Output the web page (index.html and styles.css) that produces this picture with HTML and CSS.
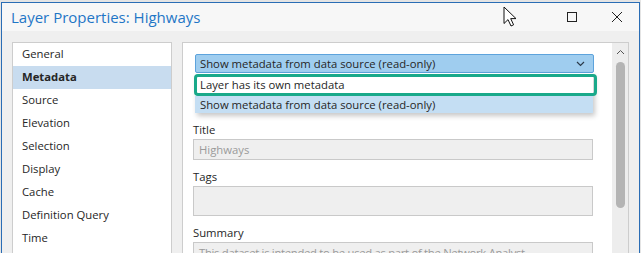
FILE: index.html
```html
<!DOCTYPE html>
<html lang="en">
<head>
    <meta charset="UTF-8">
    <title>Layer Properties: Highways</title>
    <link rel="stylesheet" href="styles.css">
</head>
<body>
<div class="window">
    <div class="titlebar">
        <span class="title">Layer Properties: Highways</span>
        <div class="controls">
            <svg class="btn" width="12" height="12" viewBox="0 0 12 12"><rect x="1.5" y="1.5" width="9" height="9" fill="none" stroke="#222" stroke-width="1"/></svg>
            <svg class="btn" width="12" height="12" viewBox="0 0 12 12"><path d="M1 1L11 11M11 1L1 11" stroke="#222" stroke-width="1" fill="none"/></svg>
        </div>
        <!-- mouse pointer over the title bar -->
        <svg class="pointer" width="14" height="21" viewBox="0 0 14 21"><path d="M1 1V17.5L5 13.6L8 20L10.6 18.8L7.7 12.6H13Z" fill="#fff" stroke="#111" stroke-width="1" stroke-linejoin="round"/></svg>
    </div>
    <div class="bd">
        <ul class="nav">
            <li>General</li>
            <li class="on">Metadata</li>
            <li>Source</li>
            <li>Elevation</li>
            <li>Selection</li>
            <li>Display</li>
            <li>Cache</li>
            <li>Definition Query</li>
            <li>Time</li>
        </ul>
        <div class="panel">
            <div class="content">
                <div class="combo-wrap">
                    <div class="combo">
                        <span>Show metadata from data source (read-only)</span>
                        <svg width="9" height="6" viewBox="0 0 9 6"><path d="M1 1L4.5 4.5L8 1" stroke="#2b3a4a" stroke-width="1.2" fill="none"/></svg>
                    </div>
                    <ul class="popup">
                        <li class="hl">Layer has its own metadata</li>
                        <li class="sel">Show metadata from data source (read-only)</li>
                    </ul>
                </div>
                <p class="lbl lbl-first">Title</p>
                <div class="field">Highways</div>
                <p class="lbl">Tags</p>
                <div class="field tall"></div>
                <p class="lbl">Summary</p>
                <div class="field summary">This dataset is intended to be used as part of the Network Analyst</div>
            </div>
            <div class="scrollbar">
                <svg width="9" height="6" viewBox="0 0 9 6"><path d="M1 5L4.5 1.5L8 5" stroke="#555" stroke-width="1" fill="none"/></svg>
                <div class="thumb"></div>
            </div>
        </div>
    </div>
</div>
</body>
</html>
```

FILE: styles.css
```css
/* reset */
html,body{margin:0;padding:0;}
ul,p{margin:0;padding:0;list-style:none;}
body{
    background:#e4e4e4;
    font-family:"Open Sans","Noto Sans",sans-serif;
    font-size:11.3px;
    color:#262626;
    height:253px;
    overflow:hidden;
}

/* window frame */
.window{
    margin:2px 0 0 1px;
    width:637px;
    height:260px;
    border:1px solid #2a6db5;
    border-bottom:0;
    background:#efefef;
}
.titlebar{
    position:relative;
    height:28px;
    background:#f7f7f7;
    display:flex;
    align-items:center;
}
.title{
    margin-left:9px;
    font-size:15px;
    color:#1f76c6;
}
.controls{
    margin-left:auto;
    display:flex;
    gap:33px;
    margin-right:16px;
}
.btn{display:block;}
.pointer{position:absolute;left:501px;top:3px;}

/* body: nav + panel */
.bd{
    display:flex;
    gap:10px;
    padding:11px 10px 0 10px;
}
.nav{
    width:158px;
    height:240px;
    background:#fff;
    border:1px solid #cdcdcd;
}
.nav li{
    height:23px;
    line-height:22px;
    padding-left:9px;
}
.nav li.on{
    background:#c8dcef;
    font-weight:bold;
}

.panel{
    flex:1;
    height:240px;
    display:flex;
    background:#fff;
    border:1px solid #cdcdcd;
}
.content{
    flex:1;
    padding:11px 0 0 10px;
}
.combo-wrap{position:relative;margin-left:2px;width:399px;}
.combo{
    height:17px;
    display:flex;
    align-items:center;
    padding:0 8px 0 4px;
    background:#9fcdef;
    border:1px solid #5da3dc;
    border-radius:2px;
}
.combo span{flex:1;}
.popup{
    position:absolute;
    left:0;
    top:19px;
    width:398px;
    background:#fff;
    box-shadow:2px 3px 5px rgba(0,0,0,0.22);
}
.popup li{
    padding-left:5px;
    line-height:17px;
}
.popup li.hl{
    /* green annotation frame */
    margin-top:1px;
    height:16px;
    line-height:16px;
    border:3px solid #19a98a;
    border-radius:4px;
    margin-right:-4px;
    margin-left:-1px;
    padding-left:3px;
}
.popup li.sel{background:#c4def3;height:17px;padding-left:5px;}

.lbl{
    height:16px;
    line-height:16px;
    margin-top:9px;
}
.lbl-first{margin-top:49px;}
.field{
    width:393px;
    height:19px;
    line-height:19px;
    margin-top:1px;
    padding-left:5px;
    background:#efefef;
    border:1px solid #c9c9c9;
    color:#9a9a9a;
    white-space:nowrap;
    overflow:hidden;
}
.field.tall{height:28px;}
.field.summary{letter-spacing:-0.3px;}

.scrollbar{
    width:16px;
    background:#ededed;
    display:flex;
    flex-direction:column;
    align-items:center;
}
.scrollbar svg{margin-top:6px;}
.thumb{
    margin-top:7px;
    width:9px;
    height:146px;
    border-radius:5px;
    background:#b4b4b4;
}
```
